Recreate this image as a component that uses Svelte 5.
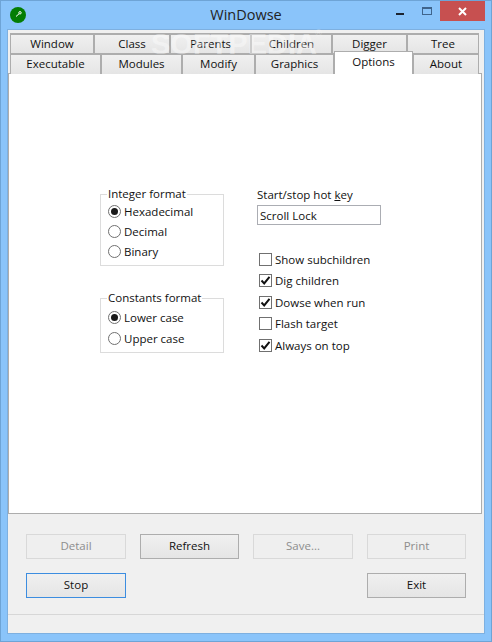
<script lang="ts">
	const row1 = ['Window', 'Class', 'Parents', 'Children', 'Digger', 'Tree'];
	const row2 = ['Executable', 'Modules', 'Modify', 'Graphics', 'Options', 'About'];
	const checks = [
		{ label: 'Show subchildren', on: false },
		{ label: 'Dig children', on: true },
		{ label: 'Dowse when run', on: true },
		{ label: 'Flash target', on: false },
		{ label: 'Always on top', on: true }
	];
</script>

{#snippet radio(label: string, on: boolean)}
	<div class="opt radio-row">
		<span class="radio" class:on></span>
		<span>{label}</span>
	</div>
{/snippet}

<div class="window">
	<div class="titlebar">
		<div class="app-icon">
			<svg width="16" height="16" viewBox="0 0 16 16">
				<circle cx="8" cy="8" r="8" fill="#047d04" />
				<circle cx="10" cy="5.8" r="1.2" fill="none" stroke="#fff" stroke-width="1" />
				<line x1="9" y1="6.8" x2="6" y2="9.5" stroke="#fff" stroke-width="1" />
			</svg>
		</div>
		<div class="title">WinDowse</div>
		<div class="controls">
			<div class="min"><span></span></div>
			<div class="max"><span></span></div>
			<div class="close">
				<svg width="9" height="9" viewBox="0 0 9 9">
					<path d="M1 1L8 8M8 1L1 8" stroke="#fff" stroke-width="2" />
				</svg>
			</div>
		</div>
	</div>

	<div class="client">
		<div class="tabs">
			<div class="tabrow first">
				{#each row1 as t}
					<div class="tab">{t}</div>
				{/each}
			</div>
			<div class="tabrow second">
				{#each row2 as t}
					<div class="tab" class:selected={t === 'Options'}>{t}</div>
				{/each}
			</div>
			<div class="watermark">SOFTPEDIA<span class="reg">®</span></div>
		</div>

		<div class="page">
			<div class="col-left">
				<fieldset class="group">
					<legend>Integer format</legend>
					{@render radio('Hexadecimal', true)}
					{@render radio('Decimal', false)}
					{@render radio('Binary', false)}
				</fieldset>
				<fieldset class="group second-group">
					<legend>Constants format</legend>
					{@render radio('Lower case', true)}
					{@render radio('Upper case', false)}
				</fieldset>
			</div>
			<div class="col-right">
				<div class="hot-label">Start/stop hot <u>k</u>ey</div>
				<div class="hot-input">Scroll Lock</div>
				<div class="checks">
					{#each checks as c}
						<div class="opt check-row">
							<span class="check">
								{#if c.on}
									<svg width="11" height="11" viewBox="0 0 11 11">
										<path d="M1.5 5.5L4.2 8.4L9.5 1.8" fill="none" stroke="#111" stroke-width="2" />
									</svg>
								{/if}
							</span>
							<span>{c.label}</span>
						</div>
					{/each}
				</div>
			</div>
		</div>

		<div class="buttons">
			<div class="btn disabled">Detail</div>
			<div class="btn">Refresh</div>
			<div class="btn disabled">Save...</div>
			<div class="btn disabled">Print</div>
			<div class="btn focus">Stop</div>
			<div class="btn exit">Exit</div>
		</div>

		<div class="status"></div>
	</div>
</div>

<style>
	:global(body) {
		margin: 0;
		background: #8ac4fa;
	}

	.window {
		width: 492px;
		height: 642px;
		box-sizing: border-box;
		background: #8ac4fa;
		border: 1px solid #6ea4d6;
		display: flex;
		flex-direction: column;
		font-family: "Open Sans", "Noto Sans", sans-serif;
		font-size: 11.5px;
		color: #111;
		overflow: hidden;
	}

	.titlebar {
		height: 28px;
		flex: none;
		display: grid;
		grid-template-columns: 1fr auto 1fr;
		align-items: start;
	}

	.app-icon {
		padding: 6px 0 0 9px;
	}

	.title {
		font-size: 14.5px;
		line-height: 19px;
		padding-top: 4px;
		color: #222;
	}

	.controls {
		display: flex;
		justify-content: flex-end;
		margin-right: 6px;
	}

	.min {
		width: 28px;
		height: 20px;
		display: flex;
		align-items: flex-end;
		justify-content: center;
	}

	.min span {
		width: 8px;
		height: 2px;
		background: #1c2430;
		margin-bottom: 6px;
	}

	.max {
		width: 26px;
		height: 20px;
		display: flex;
		align-items: center;
		justify-content: center;
	}

	.max span {
		width: 8px;
		height: 5px;
		border: 1px solid #3f648c;
		border-top-width: 2px;
	}

	.close {
		width: 45px;
		height: 20px;
		background: #c75050;
		display: flex;
		align-items: center;
		justify-content: center;
	}

	.client {
		flex: 1;
		margin: 0 6px 7px 6px;
		background: #f0f0f0;
		border: 1px solid #7eb0e0;
		display: flex;
		flex-direction: column;
		min-height: 0;
	}

	.tabs {
		position: relative;
		height: 43px;
		flex: none;
		padding: 3px 0 0 2px;
		box-sizing: border-box;
		z-index: 1;
	}

	.tabrow {
		display: grid;
		height: 20px;
	}

	.tabrow.first {
		grid-template-columns: 84px 76px 81px 81px 75px 72px;
	}

	.tabrow.second {
		grid-template-columns: 91px 81px 73px 79px 79px 66px;
	}

	.tab {
		border: 2px solid #adadad;
		border-right-width: 1px;
		border-left-width: 1px;
		border-bottom: 0;
		background: linear-gradient(#f0f0f0, #e5e5e5);
		text-align: center;
		line-height: 18px;
		box-sizing: border-box;
	}

	.tab.selected {
		background: #fff;
		height: 23px;
		margin-top: -2px;
		border-width: 1px;
		border-bottom: 0;
		line-height: 19px;
		position: relative;
		z-index: 2;
	}

	.watermark {
		position: absolute;
		left: 143px;
		top: -2px;
		font-family: "Liberation Sans", sans-serif;
		font-size: 29px;
		font-weight: 700;
		white-space: nowrap;
		color: rgba(255, 255, 255, 0.4);
		pointer-events: none;
		z-index: 3;
	}

	.reg {
		position: absolute;
		right: -5px;
		top: 0;
		font-size: 9px;
		font-weight: 400;
	}

	.page {
		height: 441px;
		flex: none;
		margin-right: 2px;
		box-sizing: border-box;
		background: #fff;
		border: 1px solid #adadad;
		display: flex;
		padding: 113px 0 0 91px;
		gap: 33px;
	}

	.col-left {
		width: 124px;
		display: flex;
		flex-direction: column;
		gap: 25px;
	}

	.group {
		margin: 0;
		padding: 0 0 0 7px;
		border: 1px solid #dcdcdc;
		min-width: 0;
		height: 79px;
		box-sizing: border-box;
	}

	.second-group {
		height: 62px;
		padding-top: 2px;
	}

	.second-group .opt {
		height: 21px;
	}

	legend {
		padding: 0 1px;
		margin-left: -1px;
		line-height: 13px;
		height: 14px;
	}

	.opt {
		display: flex;
		align-items: center;
		height: 20px;
	}

	.radio-row {
		gap: 3px;
	}

	.radio {
		width: 13px;
		height: 13px;
		box-sizing: border-box;
		border: 1px solid #707070;
		border-radius: 50%;
		background: #fff;
		display: flex;
		align-items: center;
		justify-content: center;
	}

	.radio.on::after {
		content: '';
		width: 7px;
		height: 7px;
		border-radius: 50%;
		background: #1a1a1a;
	}

	.col-right {
		width: 124px;
		padding-top: 1px;
	}

	.hot-label {
		line-height: 14px;
		white-space: nowrap;
	}

	.hot-input {
		height: 20px;
		line-height: 19px;
		box-sizing: border-box;
		margin-top: 3px;
		border: 1px solid #abadb3;
		padding-left: 2px;
	}

	.checks {
		margin-top: 24.4px;
		display: flex;
		flex-direction: column;
		gap: 1.5px;
	}

	.check-row {
		gap: 3px;
		padding-left: 2px;
	}

	.check {
		width: 13px;
		height: 13px;
		box-sizing: border-box;
		border: 1px solid #707070;
		background: #fff;
		display: flex;
		align-items: center;
		justify-content: center;
	}

	.buttons {
		display: grid;
		grid-template-columns: 100px 99px 100px 99px;
		grid-auto-rows: 25px;
		column-gap: 14px;
		row-gap: 14px;
		padding: 20px 0 0 18px;
		height: 100px;
		box-sizing: border-box;
		flex: none;
	}

	.btn {
		border: 1px solid #adadad;
		background: linear-gradient(#f0f0f0, #e5e5e5);
		text-align: center;
		line-height: 21px;
		box-sizing: border-box;
	}

	.btn.disabled {
		border-color: #d9d9d9;
		background: #efefef;
		color: #8d8d8d;
	}

	.btn.focus {
		border-color: #3c8de0;
	}

	.btn.exit {
		grid-column: 4;
	}

	.status {
		flex: 1;
		border-top: 1px solid #d7d7d7;
	}
</style>
